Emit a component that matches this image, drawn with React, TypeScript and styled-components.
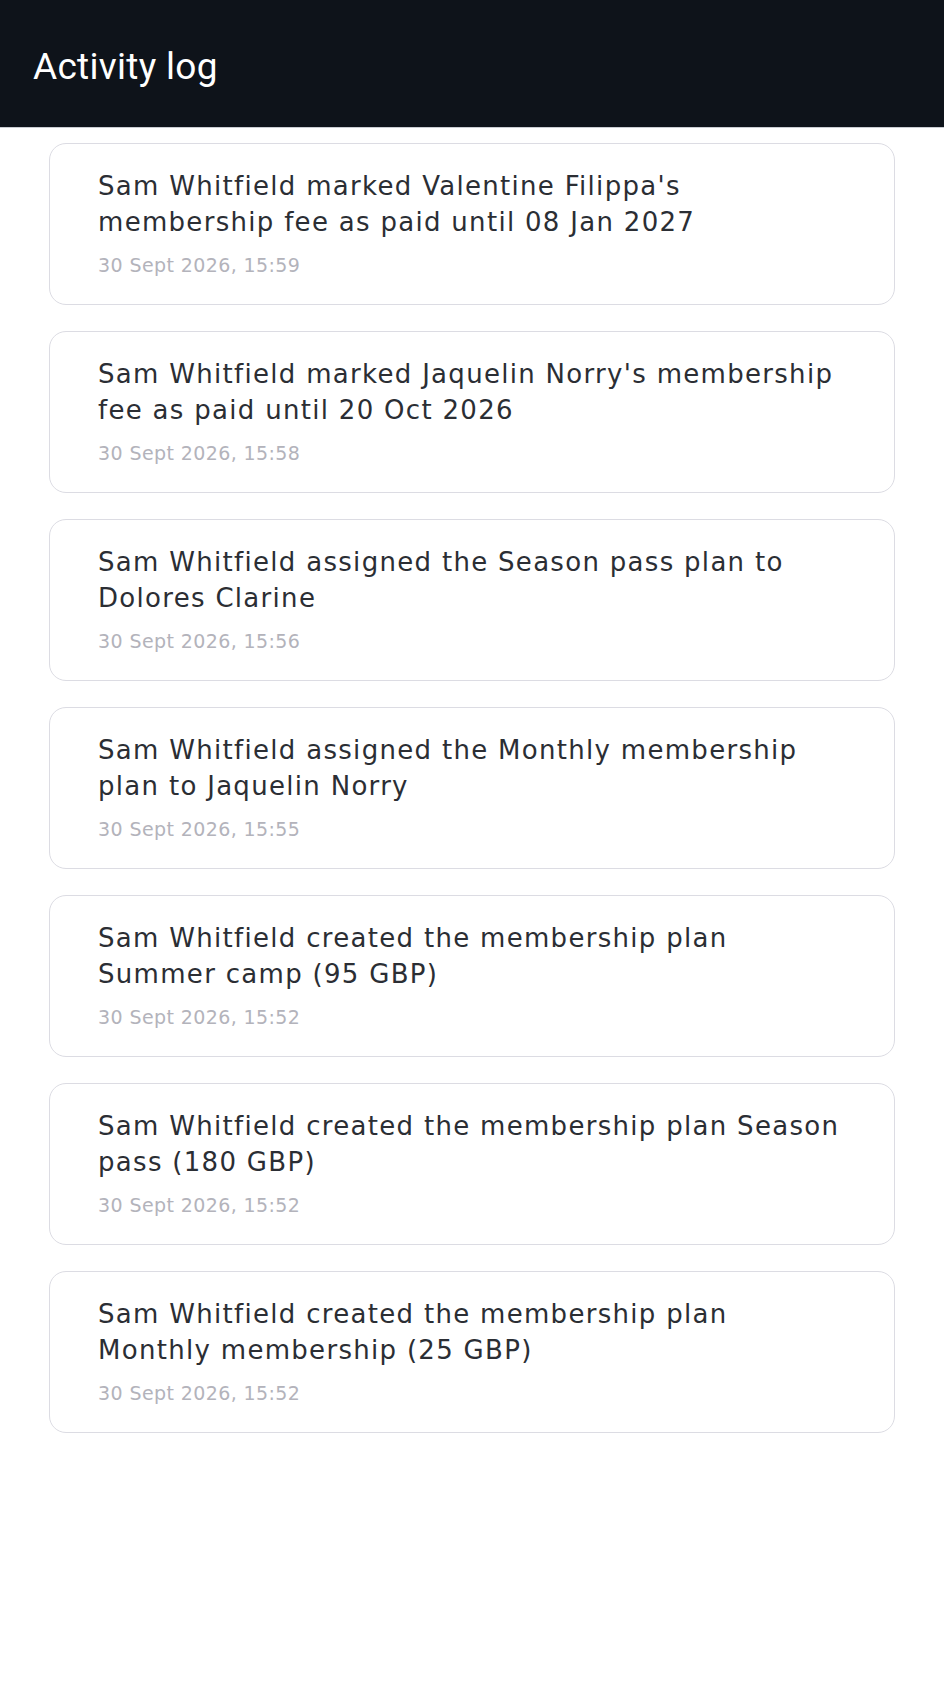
import React from "react";
import styled, { createGlobalStyle } from "styled-components";

const GlobalStyle = createGlobalStyle`
  html, body {
    margin: 0;
    padding: 0;
    background: #ffffff;
  }
  body {
    font-family: "DejaVu Sans", "Noto Sans", sans-serif;
    -webkit-font-smoothing: antialiased;
  }
  * { box-sizing: border-box; }
`;

const Page = styled.div`
  min-height: 1694px;
  background: #ffffff;
  display: flex;
  flex-direction: column;
`;

const TopBar = styled.header`
  height: 128px;
  background: #0e131a;
  border-bottom: 1px solid #c9ccd2;
  display: flex;
  align-items: center;
  padding: 6px 33px 0;
`;

const Title = styled.h1`
  margin: 0;
  color: #ffffff;
  font-family: Roboto, "Liberation Sans", sans-serif;
  font-weight: 400;
  font-size: 37px;
  letter-spacing: 0.3px;
`;

const List = styled.main`
  display: flex;
  flex-direction: column;
  gap: 26px;
  padding: 15px 49px 40px;
`;

const Card = styled.article`
  border: 1px solid #dcdce3;
  border-radius: 17px;
  background: #ffffff;
  padding: 24px 48px 25px;
  display: flex;
  flex-direction: column;
  gap: 12px;
`;

const Message = styled.p`
  margin: 0;
  color: #2b2e34;
  font-size: 26px;
  letter-spacing: 1.3px;
  line-height: 36px;
  white-space: pre-line;
`;

const Stamp = styled.time`
  color: #b3b3bb;
  font-size: 19px;
  letter-spacing: 0.4px;
  line-height: 27px;
`;

type Entry = { text: string; time: string };

const entries: Entry[] = [
  {
    text: "Sam Whitfield marked Valentine Filippa's\nmembership fee as paid until 08 Jan 2027",
    time: "30 Sept 2026, 15:59",
  },
  {
    text: "Sam Whitfield marked Jaquelin Norry's membership\nfee as paid until 20 Oct 2026",
    time: "30 Sept 2026, 15:58",
  },
  {
    text: "Sam Whitfield assigned the Season pass plan to\nDolores Clarine",
    time: "30 Sept 2026, 15:56",
  },
  {
    text: "Sam Whitfield assigned the Monthly membership\nplan to Jaquelin Norry",
    time: "30 Sept 2026, 15:55",
  },
  {
    text: "Sam Whitfield created the membership plan\nSummer camp (95 GBP)",
    time: "30 Sept 2026, 15:52",
  },
  {
    text: "Sam Whitfield created the membership plan Season\npass (180 GBP)",
    time: "30 Sept 2026, 15:52",
  },
  {
    text: "Sam Whitfield created the membership plan\nMonthly membership (25 GBP)",
    time: "30 Sept 2026, 15:52",
  },
];

export default function App() {
  return (
    <>
      <GlobalStyle />
      <Page>
        <TopBar>
          <Title>Activity log</Title>
        </TopBar>
        <List>
          {entries.map((e, i) => (
            <Card key={i}>
              <Message>{e.text}</Message>
              <Stamp>{e.time}</Stamp>
            </Card>
          ))}
        </List>
      </Page>
    </>
  );
}
